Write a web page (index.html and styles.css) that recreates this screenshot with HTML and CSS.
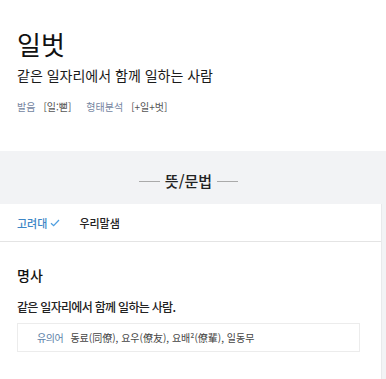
FILE: index.html
```html
<!DOCTYPE html>
<html lang="ko">
<head>
    <meta charset="UTF-8">
    <meta name="viewport" content="width=device-width, initial-scale=1.0">
    <title>일벗 - 사전</title>
    <link rel="stylesheet" href="styles.css">
</head>
<body>
    <header class="entry-head">
        <h1 class="entry-word">일벗</h1>
        <p class="entry-summary">같은 일자리에서 함께 일하는 사람</p>
        <div class="entry-info">
            <span class="info-label">발음</span>
            <span class="info-value">[일:뻗]</span>
            <span class="info-label gap">형태분석</span>
            <span class="info-value">[+일+벗]</span>
        </div>
    </header>

    <section class="meaning">
        <h2 class="section-title"><span class="dash"></span>뜻/문법<span class="dash"></span></h2>

        <div class="card">
            <div class="tabs">
                <a class="tab active">고려대<svg class="check" viewBox="0 0 12 10" width="10" height="8"><path d="M1 5.2 L4.3 8.3 L11 1.3" fill="none" stroke="currentColor" stroke-width="1.6"/></svg></a>
                <a class="tab">우리말샘</a>
            </div>

            <div class="sense">
                <h3 class="pos">명사</h3>
                <p class="definition">같은 일자리에서 함께 일하는 사람.</p>
                <div class="related">
                    <span class="related-label">유의어</span>
                    <span class="related-words">동료(同僚), 요우(僚友), 요배²(僚輩), 일동무</span>
                </div>
            </div>
        </div>
    </section>
</body>
</html>
```

FILE: styles.css
```css
* {
    margin: 0;
    padding: 0;
    box-sizing: border-box;
}

body {
    font-family: "Noto Sans CJK KR", "Noto Sans", sans-serif;
    color: #111;
    background: #fff;
    width: 386px;
}

.entry-head {
    padding: 25px 17px 0;
    height: 151px;
}

.entry-word {
    font-size: 26px;
    font-weight: 400;
    line-height: 38px;
}

.entry-summary {
    font-size: 14px;
    line-height: 22px;
    margin-top: 1px;
    color: #1a1a1a;
}

.entry-info {
    margin-top: 13px;
    font-size: 10px;
    line-height: 16px;
    color: #555;
    display: flex;
    gap: 8px;
}

.info-label {
    color: #7384a0;
}

.info-label.gap {
    margin-left: 7px;
}

.meaning {
    background: #f2f3f5;
    padding-top: 19px;
    height: 228px;
}

.section-title {
    display: flex;
    justify-content: center;
    align-items: center;
    gap: 5px;
    padding-right: 9px;
    font-size: 15px;
    font-weight: 500;
    line-height: 22px;
    color: #222;
}

.dash {
    width: 21px;
    height: 1px;
    background: #aaa;
}

.card {
    background: #fff;
    margin-top: 12px;
    margin-right: 4px;
    border-right: 1px solid #e8e9eb;
    height: 175px;
}

.tabs {
    display: flex;
    gap: 19px;
    padding: 0 17px;
    height: 38px;
    align-items: center;
    border-bottom: 1px solid #e4e4e4;
}

.tab {
    font-size: 11px;
    font-weight: 500;
    color: #222;
    display: flex;
    align-items: center;
    gap: 3px;
}

.tab.active {
    color: #3d86c6;
}

.check {
    color: #4f9fe0;
}

.sense {
    padding: 22px 17px 0;
}

.pos {
    font-size: 14px;
    font-weight: 500;
    line-height: 22px;
}

.definition {
    margin-top: 12px;
    font-size: 12px;
    font-weight: 500;
    letter-spacing: -0.7px;
    line-height: 18px;
    color: #222;
}

.related {
    margin-top: 7px;
    margin-right: 4px;
    border: 1px solid #ececec;
    height: 29px;
    display: flex;
    align-items: center;
    gap: 7px;
    padding-left: 19px;
    font-size: 10px;
}

.related-label {
    color: #5d7fa8;
    letter-spacing: -0.4px;
}

.related-words {
    color: #444;
}
```
